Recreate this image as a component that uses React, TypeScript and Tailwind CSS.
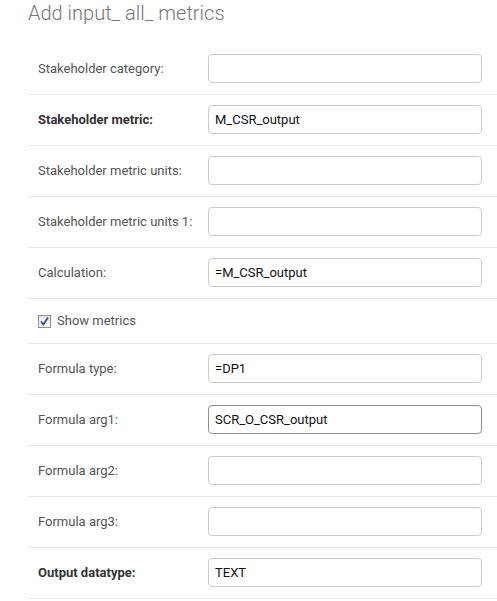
import React, { useState } from 'react'

type Field = {
  label: string
  value?: string
  bold?: boolean
  focused?: boolean
}

const topFields: Field[] = [
  { label: 'Stakeholder category:' },
  { label: 'Stakeholder metric:', value: 'M_CSR_output', bold: true },
  { label: 'Stakeholder metric units:' },
  { label: 'Stakeholder metric units 1:' },
  { label: 'Calculation:', value: '=M_CSR_output' },
]

const bottomFields: Field[] = [
  { label: 'Formula type:', value: '=DP1' },
  { label: 'Formula arg1:', value: 'SCR_O_CSR_output', focused: true },
  { label: 'Formula arg2:' },
  { label: 'Formula arg3:' },
  { label: 'Output datatype:', value: 'TEXT', bold: true },
]

const FieldRow = ({ field }: { field: Field }) => (
  <div className="flex items-center h-[51px] border-b border-[#e6e6e6] pb-px">
    <label
      className={`w-[180px] pl-[10px] text-[13px] ${
        field.bold ? 'font-bold text-[#333]' : 'text-[#555]'
      }`}
    >
      {field.label}
    </label>
    <input
      readOnly
      defaultValue={field.value ?? ''}
      className={`w-[274px] h-[29px] rounded-[4px] border bg-white px-[6px] text-[13px] text-[#111] outline-none font-['Roboto',sans-serif] ${
        field.focused ? 'border-[#8f8f8f]' : 'border-[#cccccc]'
      }`}
    />
  </div>
)

export default function App() {
  const [showMetrics, setShowMetrics] = useState(true)

  return (
    <div className="min-h-screen bg-white font-['Roboto',sans-serif]">
      <h1 className="pl-[28px] pt-[1px] h-[44px] text-[20px] font-light text-[#777] leading-[24px]">
        Add input_ all_ metrics
      </h1>
      <div className="ml-[28px]">
        {topFields.map((f) => (
          <FieldRow key={f.label} field={f} />
        ))}
        <div className="flex items-center h-[45px] border-b border-[#e6e6e6] pl-[10px]">
          <label
            className="flex items-center gap-[6px] text-[13px] text-[#555] cursor-pointer"
            onClick={() => setShowMetrics(!showMetrics)}
          >
            <span className="w-[13px] h-[13px] border border-[#8e8f8f] bg-gradient-to-b from-[#e8e8e8] to-[#f8f8f8] flex items-center justify-center">
              {showMetrics && (
                <svg viewBox="0 0 11 11" className="w-[11px] h-[11px]">
                  <path d="M2 5.5 L4.3 8.5 L9 1.5" fill="none" stroke="#2b4fa8" strokeWidth="1.8" />
                </svg>
              )}
            </span>
            Show metrics
          </label>
        </div>
        {bottomFields.map((f) => (
          <FieldRow key={f.label} field={f} />
        ))}
      </div>
    </div>
  )
}
